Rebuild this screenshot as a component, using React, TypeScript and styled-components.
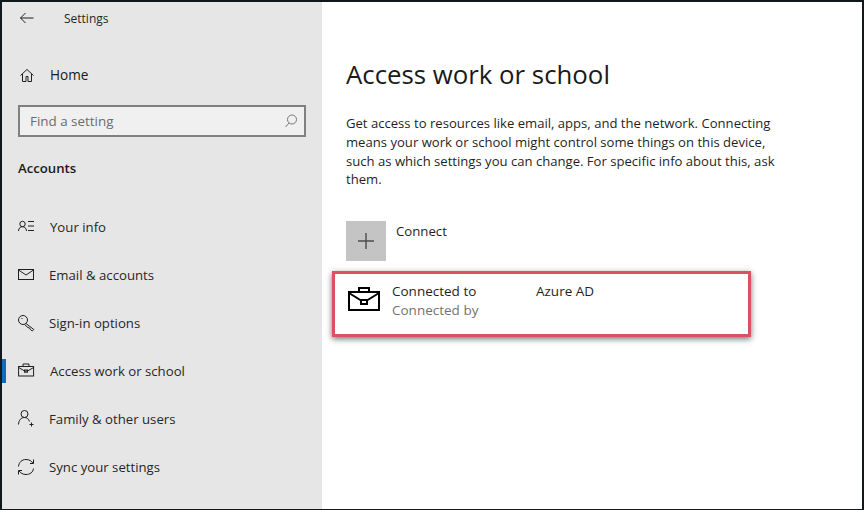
import React from 'react'
import styled, { createGlobalStyle } from 'styled-components'

const GlobalStyle = createGlobalStyle`
  html, body {
    margin: 0;
    padding: 0;
    background: #fff;
  }
  body {
    font-family: 'Open Sans', 'Liberation Sans', sans-serif;
    color: #1a1a1a;
  }
`

const Frame = styled.div`
  box-sizing: border-box;
  width: 864px;
  height: 510px;
  display: flex;
  overflow: hidden;
  background: #fff;
  border-style: solid;
  border-color: #10181c;
  border-width: 2px 2px 1px 2px;
`

const Sidebar = styled.aside`
  width: 320px;
  flex: none;
  background: #e6e6e6;
  display: flex;
  flex-direction: column;
`

const TitleBar = styled.div`
  display: flex;
  align-items: center;
  height: 32px;
  padding-left: 18px;
  font-size: 12px;
`

const WindowTitle = styled.span`
  margin-left: 26px;
  color: #262626;
`

const HomeRow = styled.div`
  display: flex;
  align-items: center;
  height: 30px;
  margin-top: 25px;
  padding-left: 18px;
  font-size: 13.6px;
  gap: 12px;
`

const SearchBox = styled.div`
  box-sizing: border-box;
  width: 288px;
  height: 32px;
  margin: 16px 0 0 16px;
  padding: 0 7px 0 10px;
  display: flex;
  align-items: center;
  justify-content: space-between;
  background: #f0f0f0;
  border: 2px solid #808080;
  font-size: 13.4px;
  color: #6b6b6b;
`

const SectionTitle = styled.div`
  margin: 20px 0 0 16px;
  font-size: 13.2px;
  line-height: 22px;
  font-weight: 600;
  color: #1a1a1a;
`

const Nav = styled.nav`
  margin-top: 24px;
  display: flex;
  flex-direction: column;
`

const NavRow = styled.div<{ $active?: boolean; $gap: number }>`
  position: relative;
  display: flex;
  align-items: center;
  height: 48px;
  padding-left: 16px;
  gap: ${p => p.$gap}px;
  font-size: 13.2px;
  color: #262626;

  ${p =>
    p.$active &&
    `
    &::before {
      content: '';
      position: absolute;
      left: 0;
      top: 12px;
      width: 4px;
      height: 24px;
      background: #0f6cbd;
    }
  `}
`

const IconSlot = styled.span`
  width: 18px;
  height: 18px;
  flex: none;
  display: flex;
  color: #1f1f1f;
`

const Main = styled.main`
  flex: 1;
  padding: 0 0 0 10px;
  display: flex;
  flex-direction: column;
`

const Heading = styled.h1`
  margin: 53px 0 0 14px;
  font-size: 25.8px;
  line-height: 38px;
  font-weight: 400;
  color: #1a1a1a;
`

const Intro = styled.p`
  margin: 21px 0 0 14px;
  width: 440px;
  font-size: 13.1px;
  line-height: 18.8px;
  color: #1f1f1f;
`

const ConnectRow = styled.div`
  display: flex;
  margin: 32px 0 0 14px;
  gap: 10px;
  font-size: 13.2px;
  line-height: 20px;
  color: #1f1f1f;
`

const PlusTile = styled.div`
  width: 40px;
  height: 40px;
  background: #c4c4c4;
  display: flex;
  align-items: center;
  justify-content: center;
  color: #4d4d4d;
`

const AccountCard = styled.div`
  box-sizing: border-box;
  width: 419px;
  height: 66px;
  margin-top: 10px;
  padding: 8px 0 0 13px;
  display: flex;
  gap: 10px;
  border: 3px solid #d9545f;
  box-shadow: 0 2px 6px rgba(0, 0, 0, 0.55);
`

const CardIcon = styled.span`
  width: 34px;
  height: 26px;
  flex: none;
  margin-top: 5px;
  display: flex;
`

const CardText = styled.div`
  font-size: 13.5px;
  line-height: 19px;
`

const CardLine = styled.div`
  display: flex;
  color: #1f1f1f;
`

const CardName = styled.span`
  width: 144px;
`

const CardSub = styled.div`
  color: #737373;
`

const Line = styled.svg.attrs({
  fill: 'none',
  stroke: 'currentColor',
  strokeWidth: 1,
  viewBox: '0 0 18 18',
})`
  display: block;
  width: 100%;
  height: 100%;
`

const navItems: { label: string; gap: number; active?: boolean; icon: React.ReactNode }[] = [
  {
    label: 'Your info',
    gap: 14,
    icon: (
      <Line>
        <circle cx="4.500" cy="6" r="2.700" />
        <path d="M.5 13c.2-2.800 1.700-4.300 4-4.300s3.800 1.500 4 4.300M10 3.500h6M10 8h6M10 12.500h6" />
      </Line>
    ),
  },
  {
    label: 'Email & accounts',
    gap: 13,
    icon: (
      <Line>
        <rect x=".5" y="3.500" width="15" height="10" />
        <path d="M.5 4l7.500 5 7.500-5" />
      </Line>
    ),
  },
  {
    label: 'Sign-in options',
    gap: 13,
    icon: (
      <Line>
        <circle cx="5" cy="6" r="4.500" />
        <path d="M3.500 4.500h1M8 9.500l7.800 6-1.500 1.500-2-1.500-.8-1.600-1.500-.3L6.500 10.500" />
      </Line>
    ),
  },
  {
    label: 'Access work or school',
    gap: 14,
    active: true,
    icon: (
      <Line strokeWidth="1.200">
        <rect x=".6" y="4.500" width="15" height="9.500" />
        <path d="M5 4.500V2h6v2.500M.6 5.500l6 3.500h3l6-3.500" />
        <rect x="6.500" y="8" width="3" height="2.200" />
      </Line>
    ),
  },
  {
    label: 'Family & other users',
    gap: 13,
    icon: (
      <Line>
        <circle cx="6.500" cy="4" r="3.500" />
        <path d="M.5 14.500C.8 10 3 7.500 6.500 7.500c2.500 0 4.200 1.500 5 4M13.500 12.500v4M11.500 14.500h4" />
      </Line>
    ),
  },
  {
    label: 'Sync your settings',
    gap: 13,
    icon: (
      <Line>
        <path d="M.5 8.500C1 4 4 1.500 8 1.500c3 0 5.500 1.300 7 3.800M15.500 1.500v4h-3.500M15.500 10.500c-.5 3.800-3.500 6-7.500 6-3 0-5.500-1.300-7-3.800M.5 16.500v-4H4" />
      </Line>
    ),
  },
]

export default function App() {
  return (
    <>
      <GlobalStyle />
      <Frame>
        <Sidebar>
          <TitleBar>
            <IconSlot>
              <Line>
                <path d="M.5 9h13M5.500 4l-5 5 5 5" />
              </Line>
            </IconSlot>
            <WindowTitle>Settings</WindowTitle>
          </TitleBar>
          <HomeRow>
            <IconSlot>
              <Line>
                <path d="M.5 10.500L7 4.500l6.500 6M2.500 9v7.500H6v-5h2v5h3.500V9" />
              </Line>
            </IconSlot>
            Home
          </HomeRow>
          <SearchBox>
            Find a setting
            <IconSlot>
              <Line color="#777">
                <circle cx="13" cy="7.500" r="4.500" />
                <path d="M10 11l-3.500 4" />
              </Line>
            </IconSlot>
          </SearchBox>
          <SectionTitle>Accounts</SectionTitle>
          <Nav>
            {navItems.map(item => (
              <NavRow key={item.label} $active={item.active} $gap={item.gap}>
                <IconSlot>{item.icon}</IconSlot>
                {item.label}
              </NavRow>
            ))}
          </Nav>
        </Sidebar>
        <Main>
          <Heading>Access work or school</Heading>
          <Intro>
            Get access to resources like email, apps, and the network. Connecting
            means your work or school might control some things on this device,
            such as which settings you can change. For specific info about this, ask
            them.
          </Intro>
          <ConnectRow>
            <PlusTile>
              <svg width="18" height="18" viewBox="0 0 18 18" stroke="currentColor" strokeWidth="1.400">
                <path d="M9 1v16M1 9h16" />
              </svg>
            </PlusTile>
            Connect
          </ConnectRow>
          <AccountCard>
            <CardIcon>
              <svg width="32" height="26" viewBox="0 0 32 26" fill="none" stroke="#000" strokeWidth="2">
                <rect x="1" y="5" width="30" height="18" />
                <path d="M11 5V1h10v4M1 6l13 8h4l13-8" />
                <rect x="13" y="13" width="6" height="4" fill="#fff" />
              </svg>
            </CardIcon>
            <CardText>
              <CardLine>
                <CardName>Connected to</CardName>
                Azure AD
              </CardLine>
              <CardSub>Connected by</CardSub>
            </CardText>
          </AccountCard>
        </Main>
      </Frame>
    </>
  )
}
